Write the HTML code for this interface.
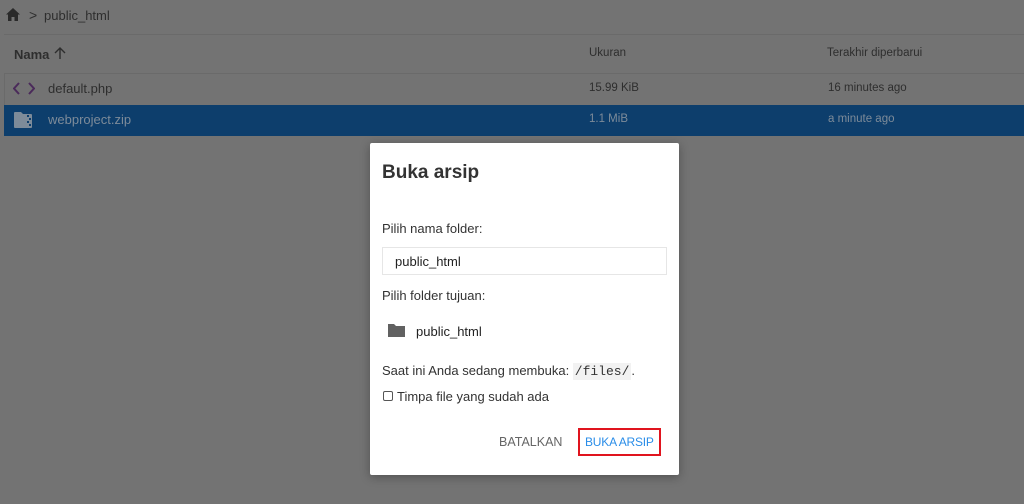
<!DOCTYPE html>
<html><head><meta charset="utf-8"><style>
*{margin:0;padding:0;box-sizing:border-box}
html,body{width:1024px;height:504px;background:#737373}
body{font-family:"Liberation Sans",sans-serif;position:relative;overflow:hidden;color:#2c2c2c}
#bg{position:absolute;left:0;top:0;width:1024px;height:504px;background:#737373}
.abs{position:absolute}
.line{position:absolute;left:4px;right:0;height:1px;background:#6a6a6a}
.t{position:absolute;font-size:13px;color:#2e2e2e}
.s{position:absolute;font-size:11.5px;color:#2e2e2e}
.modal{position:absolute;left:370px;top:143px;width:309px;height:332px;background:#fff;border-radius:2px;box-shadow:0 2px 10px rgba(0,0,0,.3)}
.m{position:absolute;font-size:13px;color:#333}
</style></head><body>
<div id="bg"></div>
<svg class="abs" style="left:6px;top:8px" width="14" height="13" viewBox="0 0 14 13"><path d="M7 0L0 6.5h2V13h3.5V9h3v4H12V6.5h2z" fill="#2a2a2a"/></svg>
<div class="t" style="left:29px;top:7px;font-size:14px">&gt;</div>
<div class="t" style="left:44px;top:8px">public_html</div>
<div class="line" style="top:34px"></div>
<div class="t" style="left:14px;top:47px;font-weight:bold">Nama</div>
<svg class="abs" style="left:54px;top:47px" width="12" height="13" viewBox="0 0 12 13"><path d="M6 12V1M1 6l5-5 5 5" stroke="#2e2e2e" stroke-width="1.4" fill="none"/></svg>
<div class="s" style="left:589px;top:47px">Ukuran</div>
<div class="s" style="left:827px;top:47px">Terakhir diperbarui</div>
<div class="line" style="top:73px"></div>
<div class="abs" style="left:4px;top:73px;width:1px;height:32px;background:#6a6a6a"></div>
<svg class="abs" style="left:13px;top:82px" width="22" height="13" viewBox="0 0 22 13"><path d="M6 1L1 6.5 6 12M16 1l5 5.5L16 12" stroke="#4a2a5a" stroke-width="2" fill="none"/></svg>
<div class="t" style="left:48px;top:81px">default.php</div>
<div class="s" style="left:589px;top:82px">15.99 KiB</div>
<div class="s" style="left:828px;top:82px">16 minutes ago</div>
<div class="abs" style="left:4px;top:105px;width:1020px;height:31px;background:#0d3e6c"></div>
<svg class="abs" style="left:13px;top:111px" width="20" height="18" viewBox="0 0 20 18"><path d="M2 1h6l2 2h8a1 1 0 011 1v12a1 1 0 01-1 1H2a1 1 0 01-1-1V2a1 1 0 011-1z" fill="#7d8b99"/><path d="M14 4h2v2h-2zM16 7h2v2h-2zM14 10h2v2h-2zM16 13h2v2h-2z" fill="#0d3e6c"/></svg>
<div class="t" style="left:48px;top:112px;color:#7d8b99">webproject.zip</div>
<div class="s" style="left:589px;top:113px;color:#7d8b99">1.1 MiB</div>
<div class="s" style="left:828px;top:113px;color:#7d8b99">a minute ago</div>
<div class="modal">
<div class="m" style="left:12px;top:19px;font-size:19px;font-weight:bold;color:#333">Buka arsip</div>
<div class="m" style="left:12px;top:78px">Pilih nama folder:</div>
<div class="abs" style="left:12px;top:104px;width:285px;height:28px;border:1px solid #e6e6e6"></div>
<div class="m" style="left:25px;top:111px;color:#222">public_html</div>
<div class="m" style="left:12px;top:145px">Pilih folder tujuan:</div>
<svg class="abs" style="left:17px;top:180px" width="19" height="15" viewBox="0 0 19 15"><path d="M1 1h6l2 2h9v11H1z" fill="#616161"/></svg>
<div class="m" style="left:46px;top:181px;color:#222">public_html</div>
<div class="m" style="left:12px;top:220px">Saat ini Anda sedang membuka: <span style="font-family:'Liberation Mono',monospace;background:#f2f2f2;padding:1px 2px">/files/</span>.</div>
<div class="abs" style="left:13px;top:248px;width:10px;height:10px;border:1px solid #555;border-radius:2px"></div>
<div class="m" style="left:27px;top:246px">Timpa file yang sudah ada</div>
<div class="m" style="left:129px;top:292px;color:#666;font-size:12.5px">BATALKAN</div>
<div class="abs" style="left:208px;top:285px;width:83px;height:28px;border:2px solid #e0141e"></div>
<div class="m" style="left:215px;top:292px;color:#2a8de8;font-size:12px;letter-spacing:-0.2px">BUKA ARSIP</div>
</div>
</body></html>
